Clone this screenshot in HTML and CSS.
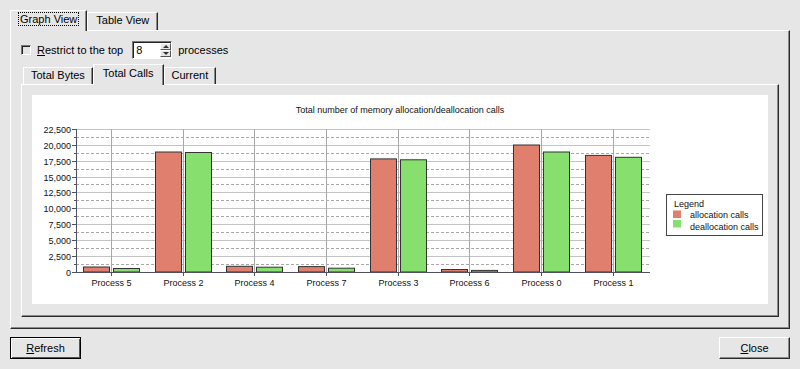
FILE: index.html
```html
<!DOCTYPE html>
<html lang="en">
<head>
    <meta charset="UTF-8">
    <title>Memory calls</title>
    <link rel="stylesheet" href="styles.css">
</head>
<body>
    <div class="dialog">
        <div class="notebook">
            <div class="tabs">
                <div class="tab active"><span class="focus">Graph View</span></div>
                <div class="tab">Table View</div>
            </div>
            <div class="page">
                <div class="options">
                    <span class="checkbox"></span>
                    <span class="label"><u>R</u>estrict to the top</span>
                    <div class="spin">
                        <span class="spin-value">8</span>
                        <span class="spin-buttons">
                            <span class="spin-up"></span>
                            <span class="spin-down"></span>
                        </span>
                    </div>
                    <span class="label">processes</span>
                </div>

                <div class="notebook inner">
                    <div class="tabs">
                        <div class="tab">Total Bytes</div>
                        <div class="tab active">Total Calls</div>
                        <div class="tab">Current</div>
                    </div>
                    <div class="page inner-page">
                        <div class="chart">
                            <svg class="chart-svg" width="736" height="209" viewBox="0 0 736 209">
                                <text class="chart-title" x="368" y="18" text-anchor="middle">Total number of memory allocation/deallocation calls</text>

                                <!-- grid -->
                                <g class="grid-major">
                                    <line x1="44" x2="618" y1="34.5" y2="34.5"/>
                                    <line x1="44" x2="618" y1="50.5" y2="50.5"/>
                                    <line x1="44" x2="618" y1="66.5" y2="66.5"/>
                                    <line x1="44" x2="618" y1="82.5" y2="82.5"/>
                                    <line x1="44" x2="618" y1="97.5" y2="97.5"/>
                                    <line x1="44" x2="618" y1="113.5" y2="113.5"/>
                                    <line x1="44" x2="618" y1="129.5" y2="129.5"/>
                                    <line x1="44" x2="618" y1="145.5" y2="145.5"/>
                                    <line x1="44" x2="618" y1="161.5" y2="161.5"/>
                                </g>
                                <g class="grid-minor">
                                    <line x1="44" x2="618" y1="42.5" y2="42.5"/>
                                    <line x1="44" x2="618" y1="58.5" y2="58.5"/>
                                    <line x1="44" x2="618" y1="74.5" y2="74.5"/>
                                    <line x1="44" x2="618" y1="89.5" y2="89.5"/>
                                    <line x1="44" x2="618" y1="105.5" y2="105.5"/>
                                    <line x1="44" x2="618" y1="121.5" y2="121.5"/>
                                    <line x1="44" x2="618" y1="137.5" y2="137.5"/>
                                    <line x1="44" x2="618" y1="153.5" y2="153.5"/>
                                    <line x1="44" x2="618" y1="169.5" y2="169.5"/>
                                </g>
                                <g class="grid-cat">
                                    <line x1="79.5" x2="79.5" y1="34" y2="177"/>
                                    <line x1="151.5" x2="151.5" y1="34" y2="177"/>
                                    <line x1="222.5" x2="222.5" y1="34" y2="177"/>
                                    <line x1="294.5" x2="294.5" y1="34" y2="177"/>
                                    <line x1="366.5" x2="366.5" y1="34" y2="177"/>
                                    <line x1="437.5" x2="437.5" y1="34" y2="177"/>
                                    <line x1="509.5" x2="509.5" y1="34" y2="177"/>
                                    <line x1="581.5" x2="581.5" y1="34" y2="177"/>
                                </g>

                                <!-- bars -->
                                <g class="bar-alloc">
                                    <rect x="51.5" y="172" width="26" height="5"/>
                                    <rect x="123.5" y="57" width="26" height="120"/>
                                    <rect x="194.5" y="171.3" width="26" height="5.7"/>
                                    <rect x="266.5" y="171.6" width="26" height="5.4"/>
                                    <rect x="338.5" y="63.9" width="26" height="113.1"/>
                                    <rect x="409.5" y="174.5" width="26" height="2.5"/>
                                    <rect x="481.5" y="50" width="26" height="127"/>
                                    <rect x="553.5" y="60.4" width="26" height="116.6"/>
                                </g>
                                <g class="bar-dealloc">
                                    <rect x="81.5" y="173.5" width="26" height="3.5"/>
                                    <rect x="153.5" y="57.5" width="26" height="119.5"/>
                                    <rect x="224.5" y="172.2" width="26" height="4.8"/>
                                    <rect x="296.5" y="173.2" width="26" height="3.8"/>
                                    <rect x="368.5" y="64.8" width="26" height="112.2"/>
                                    <rect x="439.5" y="175.4" width="26" height="1.6"/>
                                    <rect x="511.5" y="57" width="26" height="120"/>
                                    <rect x="583.5" y="62.3" width="26" height="114.7"/>
                                </g>

                                <!-- axes -->
                                <g class="axis">
                                    <line x1="44.5" x2="44.5" y1="34" y2="178"/>
                                    <line x1="44" x2="618" y1="177.5" y2="177.5"/>
                                    <line x1="40" x2="44" y1="34.5" y2="34.5"/>
                                    <line x1="40" x2="44" y1="50.5" y2="50.5"/>
                                    <line x1="40" x2="44" y1="66.5" y2="66.5"/>
                                    <line x1="40" x2="44" y1="82.5" y2="82.5"/>
                                    <line x1="40" x2="44" y1="97.5" y2="97.5"/>
                                    <line x1="40" x2="44" y1="113.5" y2="113.5"/>
                                    <line x1="40" x2="44" y1="129.5" y2="129.5"/>
                                    <line x1="40" x2="44" y1="145.5" y2="145.5"/>
                                    <line x1="40" x2="44" y1="161.5" y2="161.5"/>
                                    <line x1="40" x2="44" y1="177.5" y2="177.5"/>
                                    <line x1="42" x2="44" y1="42.5" y2="42.5"/>
                                    <line x1="42" x2="44" y1="58.5" y2="58.5"/>
                                    <line x1="42" x2="44" y1="74.5" y2="74.5"/>
                                    <line x1="42" x2="44" y1="89.5" y2="89.5"/>
                                    <line x1="42" x2="44" y1="105.5" y2="105.5"/>
                                    <line x1="42" x2="44" y1="121.5" y2="121.5"/>
                                    <line x1="42" x2="44" y1="137.5" y2="137.5"/>
                                    <line x1="42" x2="44" y1="153.5" y2="153.5"/>
                                    <line x1="42" x2="44" y1="169.5" y2="169.5"/>
                                    <line x1="79.5" x2="79.5" y1="177" y2="181"/>
                                    <line x1="151.5" x2="151.5" y1="177" y2="181"/>
                                    <line x1="222.5" x2="222.5" y1="177" y2="181"/>
                                    <line x1="294.5" x2="294.5" y1="177" y2="181"/>
                                    <line x1="366.5" x2="366.5" y1="177" y2="181"/>
                                    <line x1="437.5" x2="437.5" y1="177" y2="181"/>
                                    <line x1="509.5" x2="509.5" y1="177" y2="181"/>
                                    <line x1="581.5" x2="581.5" y1="177" y2="181"/>
                                </g>

                                <g class="y-labels" text-anchor="end">
                                    <text x="39" y="37.8">22,500</text>
                                    <text x="39" y="53.8">20,000</text>
                                    <text x="39" y="69.8">17,500</text>
                                    <text x="39" y="85.8">15,000</text>
                                    <text x="39" y="100.8">12,500</text>
                                    <text x="39" y="116.8">10,000</text>
                                    <text x="39" y="132.8">7,500</text>
                                    <text x="39" y="148.8">5,000</text>
                                    <text x="39" y="164.8">2,500</text>
                                    <text x="39" y="180.8">0</text>
                                </g>
                                <g class="x-labels" text-anchor="middle">
                                    <text x="79.5" y="191">Process 5</text>
                                    <text x="151.5" y="191">Process 2</text>
                                    <text x="222.5" y="191">Process 4</text>
                                    <text x="294.5" y="191">Process 7</text>
                                    <text x="366.5" y="191">Process 3</text>
                                    <text x="437.5" y="191">Process 6</text>
                                    <text x="509.5" y="191">Process 0</text>
                                    <text x="581.5" y="191">Process 1</text>
                                </g>

                                <!-- legend -->
                                <g class="legend">
                                    <rect class="legend-box" x="634.5" y="99.5" width="96" height="41"/>
                                    <text x="642" y="112">Legend</text>
                                    <rect class="swatch-alloc" x="641" y="115.5" width="8" height="7.5"/>
                                    <text x="658" y="123">allocation calls</text>
                                    <rect class="swatch-dealloc" x="641" y="125" width="8" height="7.5"/>
                                    <text x="658" y="135">deallocation calls</text>
                                </g>
                            </svg>
                        </div>
                    </div>
                </div>
            </div>
        </div>

        <div class="buttons">
            <button class="btn default"><u>R</u>efresh</button>
            <button class="btn"><u>C</u>lose</button>
        </div>
    </div>
</body>
</html>
```

FILE: styles.css
```css
body {
    margin: 0;
    background: #e6e6e6;
    font-family: "Liberation Sans", Arial, sans-serif;
    font-size: 11px;
    color: #000;
}
.dialog {
    padding: 10px 10px 0 10px;
}
.tabs {
    display: flex;
    align-items: flex-end;
    height: 20px;
}
.tab {
    box-sizing: border-box;
    height: 18px;
    line-height: 15px;
    padding: 0 8px;
    border: 1px solid;
    border-bottom: none;
    border-color: #fff #2a2a2a #2a2a2a #fff;
    box-shadow: inset -1px 0 #8a8a8a;
    background: #e6e6e6;
    white-space: nowrap;
}
.tab.active {
    height: 21px;
    line-height: 17px;
    margin-bottom: -1px;
    position: relative;
}
.focus {
    outline: 1px dotted #000;
    padding: 0 1px;
}
.page {
    border: 1px solid;
    border-color: #fff #2a2a2a #2a2a2a #fff;
    box-shadow: inset -1px -1px #8a8a8a;
    padding: 10px 10px 11px 10px;
}
.options {
    display: flex;
    align-items: center;
    height: 18px;
    margin-bottom: 5px;
}
.checkbox {
    box-sizing: border-box;
    width: 10px;
    height: 10px;
    border: 1px solid;
    border-color: #777 #fff #fff #777;
    box-shadow: inset 1px 1px #222;
    margin-right: 6px;
}
.spin {
    box-sizing: border-box;
    display: flex;
    width: 40px;
    height: 18px;
    margin: 0 6px 0 9px;
    border: 1px solid;
    border-color: #777 #fff #fff #777;
    box-shadow: inset 1px 1px #222;
    background: #fff;
}
.spin-value {
    flex: 1;
    padding-left: 3px;
    line-height: 16px;
}
.spin-buttons {
    display: flex;
    flex-direction: column;
    width: 11px;
    margin: 1px 0;
    background: #e6e6e6;
}
.spin-up,
.spin-down {
    box-sizing: border-box;
    flex: 1;
    display: flex;
    align-items: center;
    justify-content: center;
    border: 1px solid;
    border-color: #fff #555 #555 #fff;
}
.spin-up::before {
    content: "";
    border-left: 3px solid transparent;
    border-right: 3px solid transparent;
    border-bottom: 3px solid #333;
}
.spin-down::before {
    content: "";
    border-left: 3px solid transparent;
    border-right: 3px solid transparent;
    border-top: 3px solid #333;
}
.inner .tabs {
    padding-left: 2px;
}
.inner .tab {
    height: 17px;
    line-height: 14px;
    padding: 0 7px;
}
.inner .tab.active {
    height: 21px;
    line-height: 17px;
    padding: 0 9px;
}
.inner-page {
    padding: 10px 10px 12px 10px;
}
.chart {
    height: 209px;
    background: #fff;
}
.chart-svg {
    display: block;
    font-family: "Liberation Sans", Arial, sans-serif;
    font-size: 9px;
}
.chart-svg text {
    fill: #111;
}
.grid-major line {
    stroke: #c4c4c4;
    stroke-width: 1;
}
.grid-minor line {
    stroke: #a8a8a8;
    stroke-width: 1;
    stroke-dasharray: 3 2;
}
.grid-cat line {
    stroke: #a8a8a8;
    stroke-width: 1;
}
.bar-alloc rect {
    fill: #e17f6f;
    stroke: #333;
    stroke-width: 1;
}
.bar-dealloc rect {
    fill: #87e06d;
    stroke: #333;
    stroke-width: 1;
}
.axis line {
    stroke: #505060;
    stroke-width: 1;
}
.legend-box {
    fill: #fff;
    stroke: #444;
    stroke-width: 1;
}
.swatch-alloc {
    fill: #e17f6f;
}
.swatch-dealloc {
    fill: #87e06d;
}
.buttons {
    display: flex;
    justify-content: space-between;
    margin-top: 8px;
}
.btn {
    box-sizing: border-box;
    width: 71px;
    height: 22px;
    padding: 0;
    font: inherit;
    color: #000;
    background: #e6e6e6;
    border: 1px solid;
    border-color: #fff #2a2a2a #2a2a2a #fff;
    box-shadow: inset -1px -1px #8a8a8a;
}
.btn.default {
    border-color: #000;
    box-shadow: inset 1px 1px #fff, inset -1px -1px #555;
}
```
